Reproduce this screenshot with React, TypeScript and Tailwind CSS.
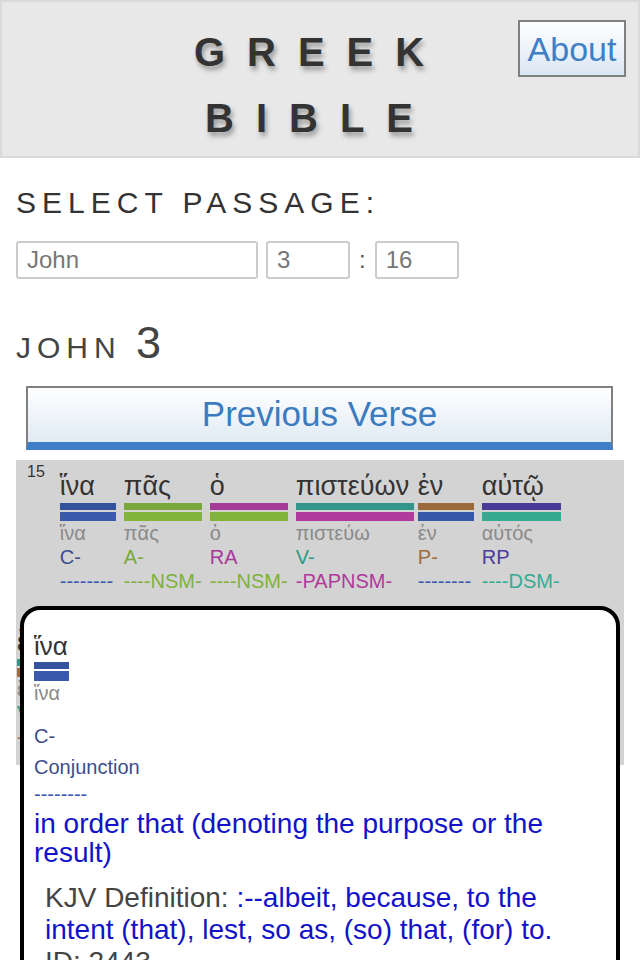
import React from "react";

type Word = {
  w: string;
  top: string;
  bot: string;
  lemma: string;
  pos: string;
  posC: string;
  parse: string;
  parseC: string;
  box: string;
};

const row1: Word[] = [
  { w: "ἵνα", top: "bg-[#35529f]", bot: "bg-[#3a59ad]", lemma: "ἵνα", pos: "C-", posC: "text-[#3d4d8c]", parse: "--------", parseC: "text-[#3a58b0]", box: "w-[56px]" },
  { w: "πᾶς", top: "bg-[#78a83a]", bot: "bg-[#82b43a]", lemma: "πᾶς", pos: "A-", posC: "text-[#7aab3a]", parse: "----NSM-", parseC: "text-[#80b13c]", box: "w-[78px] ml-[8px]" },
  { w: "ὁ", top: "bg-[#a63a98]", bot: "bg-[#82b43a]", lemma: "ὁ", pos: "RA", posC: "text-[#a8399a]", parse: "----NSM-", parseC: "text-[#80b13c]", box: "w-[78px] ml-[8px]" },
  { w: "πιστεύων", top: "bg-[#33968a]", bot: "bg-[#b0399c]", lemma: "πιστεύω", pos: "V-", posC: "text-[#2f9a85]", parse: "-PAPNSM-", parseC: "text-[#b0399c]", box: "w-[118px] ml-[8px]" },
  { w: "ἐν", top: "bg-[#9a6a3a]", bot: "bg-[#3757a8]", lemma: "ἐν", pos: "P-", posC: "text-[#a06c3c]", parse: "--------", parseC: "text-[#3a58b0]", box: "w-[56px] ml-[4px]" },
  { w: "αὐτῷ", top: "bg-[#4a3a98]", bot: "bg-[#35aa90]", lemma: "αὐτός", pos: "RP", posC: "text-[#4b3c9a]", parse: "----DSM-", parseC: "text-[#36ab92]", box: "w-[79px] ml-[8px]" },
];

const row2: Word[] = [
  { w: "ἔχῃ", top: "bg-[#33968a]", bot: "bg-[#a06c3c]", lemma: "ἔχω", pos: "V-", posC: "text-[#2f9a85]", parse: "-PAS3S-", parseC: "text-[#a06c3c]", box: "w-[70px]" },
  { w: "ζωὴν", top: "bg-[#3a59ad]", bot: "bg-[#82b43a]", lemma: "ζωή", pos: "N-", posC: "text-[#3d4d8c]", parse: "----ASF-", parseC: "text-[#80b13c]", box: "w-[78px] ml-[8px]" },
  { w: "αἰώνιον", top: "bg-[#78a83a]", bot: "bg-[#82b43a]", lemma: "αἰώνιος", pos: "A-", posC: "text-[#7aab3a]", parse: "----ASF-", parseC: "text-[#80b13c]", box: "w-[100px] ml-[8px]" },
];

function WordCol({ d }: { d: Word }) {
  return (
    <div className={`flex flex-col ${d.box}`}>
      <div className="text-[27px] leading-[30px] text-[#333] whitespace-nowrap">{d.w}</div>
      <div className={`mt-[2px] h-[7px] w-full ${d.top}`} />
      <div className={`mt-[2px] h-[9px] w-full ${d.bot}`} />
      <div className="text-[20px] leading-[24px] text-[#8a8a8a] whitespace-nowrap">{d.lemma}</div>
      <div className={`text-[20px] leading-[24px] whitespace-nowrap ${d.posC}`}>{d.pos}</div>
      <div className={`text-[20px] leading-[24px] whitespace-nowrap ${d.parseC}`}>{d.parse}</div>
    </div>
  );
}

export default function App() {
  return (
    <div className="relative w-[640px] h-[960px] overflow-hidden bg-white font-['Liberation_Sans',Arial,sans-serif]">
      {/* Header */}
      <header className="relative h-[158px] border-2 border-[#dadada] bg-[#e8e8e8] pt-[17px]">
        <div className="text-center text-[40px] leading-[66px] font-bold tracking-[22px] text-[#333] [text-shadow:2px_4px_5px_rgba(0,0,0,0.35)]">
          <div>GREEK</div>
          <div>BIBLE</div>
        </div>
        <button className="absolute right-[12px] top-[18px] h-[57px] w-[108px] border-2 border-[#808080] bg-gradient-to-b from-white to-[#dbe7f4] text-[34px] leading-none text-[#3f7fc5]">
          About
        </button>
      </header>

      <div className="px-[16px]">
        <h2 className="mt-[27px] text-[30px] leading-[36px] tracking-[6px] text-[#333] font-normal">
          SELECT PASSAGE:
        </h2>
        <div className="mt-[20px] flex items-center">
          <input
            readOnly
            value="John"
            className="h-[38px] w-[242px] rounded-[3px] border-2 border-[#cccccc] px-[9px] text-[24px] text-[#777] outline-none"
          />
          <input
            readOnly
            value="3"
            className="ml-[8px] h-[38px] w-[84px] rounded-[3px] border-2 border-[#cccccc] px-[9px] text-[24px] text-[#777] outline-none"
          />
          <span className="mx-[9px] text-[24px] text-[#555]">:</span>
          <input
            readOnly
            value="16"
            className="h-[38px] w-[84px] rounded-[3px] border-2 border-[#cccccc] px-[9px] text-[24px] text-[#777] outline-none"
          />
        </div>

        <h2 className="mt-[39px] h-[50px] leading-[50px] text-[#444] font-normal">
          <span className="text-[30px] tracking-[6px]">JOHN </span>
          <span className="text-[45px]">3</span>
        </h2>

        <button className="mx-[10px] mt-[18px] flex h-[64px] w-[587px] items-center justify-center border-2 border-b-[8px] border-[#808080] border-b-[#3f7fc6] bg-gradient-to-b from-white to-[#e0eaf4] pb-[2px] text-[35px] text-[#3b7bc0]">
          Previous Verse
        </button>

        <div className="mt-[10px] h-[305px] overflow-hidden bg-[#d3d3d3] pl-[1px] pt-[11px]">
          <div className="flex flex-wrap gap-y-[34px]">
            <sup className="ml-[10px] mr-[15px] -mt-[9px] self-start text-[16px] leading-[20px] text-[#333] top-0">15</sup>
            {row1.map((d, i) => (
              <WordCol key={i} d={d} />
            ))}
            {row2.map((d, i) => (
              <WordCol key={"b" + i} d={d} />
            ))}
          </div>
        </div>
      </div>

      {/* Popup */}
      <div className="absolute left-[20px] top-[606px] w-[600px] h-[420px] rounded-[20px] border-4 border-black bg-white pl-[10px] pr-[56px] pt-[21px]">
        <div className="text-[26px] leading-[30px] text-[#333]">ἵνα</div>
        <div className="mt-[1px] h-[7px] w-[35px] bg-[#35529f]" />
        <div className="mt-[2px] h-[10px] w-[35px] bg-[#3a59ad]" />
        <div className="text-[20px] leading-[24px] text-[#8a8a8a]">ἵνα</div>
        <div className="mt-[16px] text-[20px] leading-[31px] text-[#3d4d8c]">C-</div>
        <div className="text-[20px] leading-[31px] text-[#3d4d8c]">Conjunction</div>
        <div className="text-[20px] leading-[22px] text-[#3a58b0]">--------</div>
        <div className="mt-[4px] text-[28px] leading-[29px] text-[#1212c8]">
          in order that (denoting the purpose or the result)
        </div>
        <div className="mt-[15px] pl-[11px] text-[28px] leading-[32px]">
          <span className="text-[#444]">KJV Definition: </span>
          <span className="text-[#1212c8]">:--albeit, because, to the intent (that), lest, so as, (so) that, (for) to.</span>
          <div className="text-[#444]">ID: 2443</div>
        </div>
      </div>
    </div>
  );
}
